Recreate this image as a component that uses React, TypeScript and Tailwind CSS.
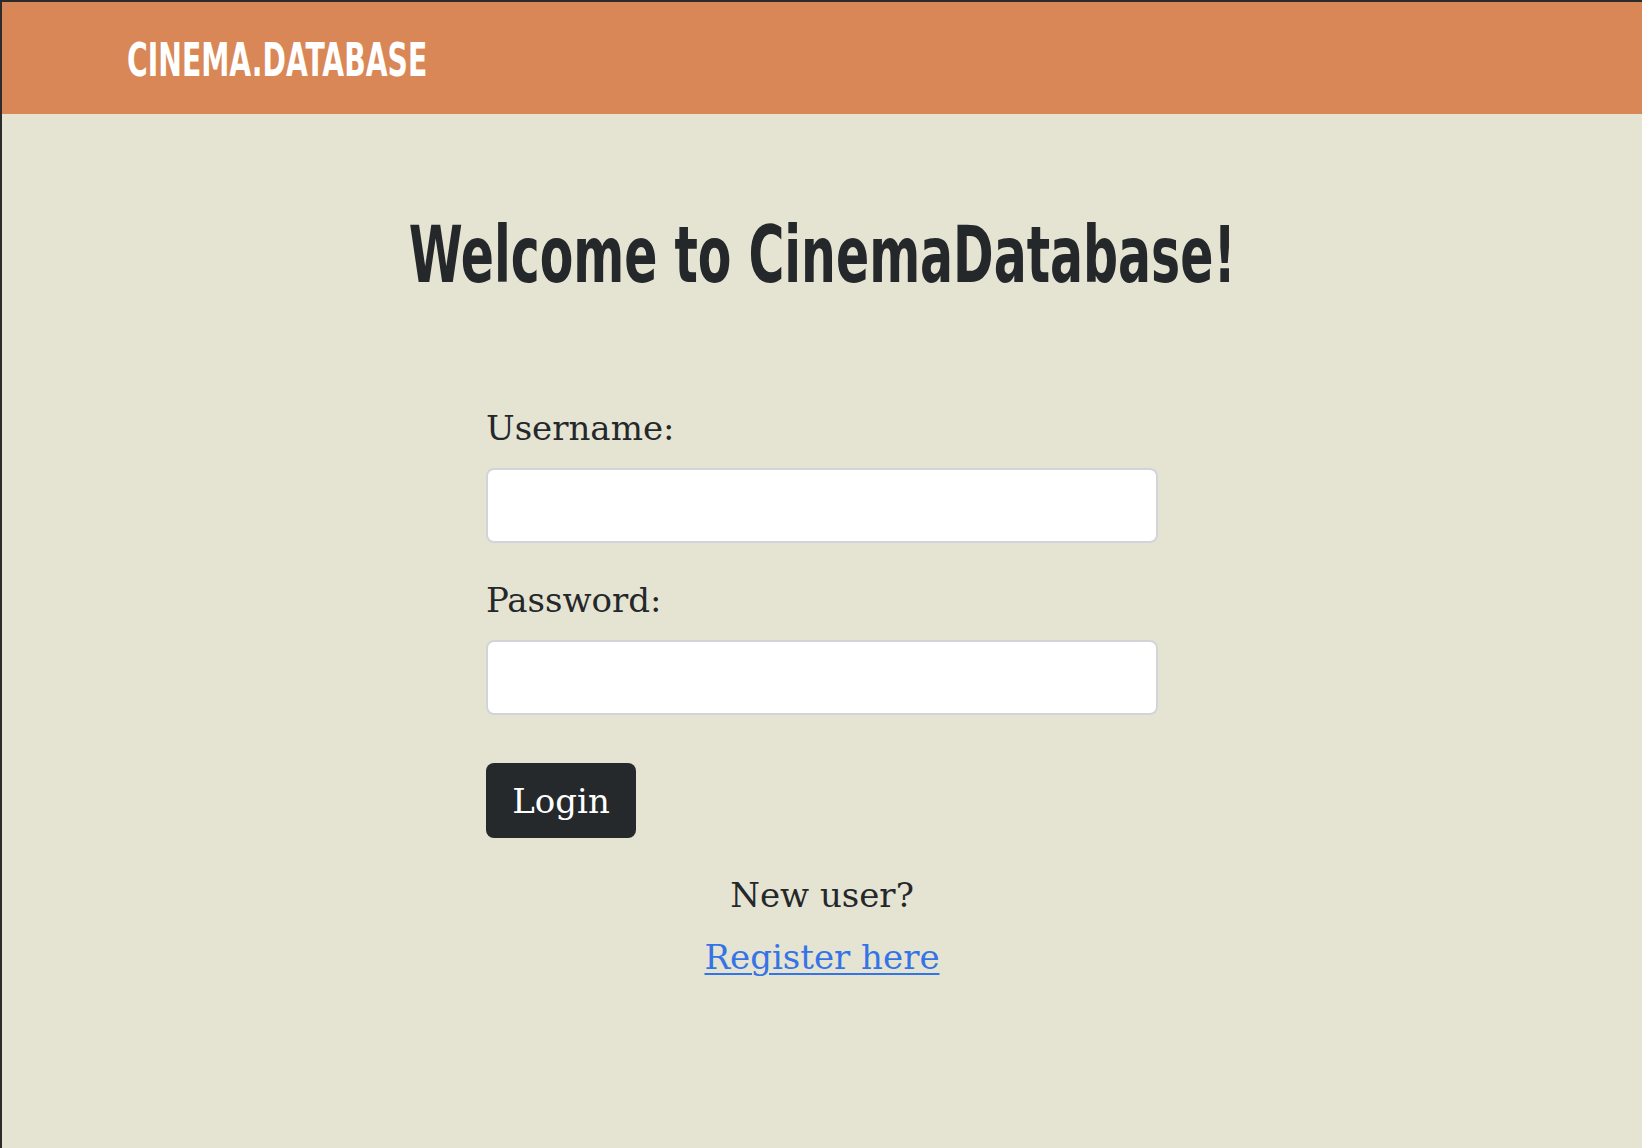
import { useState } from "react";

const condensed = "font-['DejaVu_Sans_Condensed','DejaVu_Sans',sans-serif]";
const slab = "font-['DejaVu_Serif','Liberation_Serif',serif]";

const Header = () => (
  <header className="flex h-[112px] items-center bg-[#d98756] pt-[3px] pl-[125px]">
    <span
      className={`${condensed} inline-block origin-left scale-x-[0.683] text-[46px] leading-none font-bold text-white`}
    >
      CINEMA.DATABASE
    </span>
  </header>
);

const Field = ({
  label,
  type,
  value,
  onChange,
  first,
}: {
  label: string;
  type: string;
  value: string;
  onChange: (v: string) => void;
  first?: boolean;
}) => (
  <div className={first ? "" : "mt-[40px]"}>
    <label className={`${slab} block text-[34px] leading-none text-[#25282b]`}>
      {label}
    </label>
    <input
      type={type}
      value={value}
      onChange={(e) => onChange(e.target.value)}
      className="mt-[23px] block h-[75px] w-full rounded-[8px] border-2 border-[#d1d5d9] bg-white px-4 text-[28px] outline-none"
    />
  </div>
);

export default function App() {
  const [username, setUsername] = useState("");
  const [password, setPassword] = useState("");

  return (
    <div className="min-h-screen border-t-2 border-l-2 border-[#2b2b2b] bg-[#e5e4d3]">
      <Header />
      <main className="flex flex-col items-center">
        <h1
          className={`${condensed} mt-[102px] inline-block scale-x-[0.697] text-[78px] leading-none font-bold text-[#25282b]`}
        >
          Welcome to CinemaDatabase!
        </h1>

        <form
          onSubmit={(e) => e.preventDefault()}
          className="mt-[117px] w-[672px]"
        >
          <Field
            first
            label="Username:"
            type="text"
            value={username}
            onChange={setUsername}
          />
          <Field
            label="Password:"
            type="password"
            value={password}
            onChange={setPassword}
          />
          <button
            type="submit"
            className={`${slab} mt-[48px] h-[75px] w-[150px] rounded-[8px] bg-[#26292c] text-[34px] leading-none text-white`}
          >
            Login
          </button>

          <div className={`${slab} mt-[40px] text-center text-[34px] leading-none text-[#25282b]`}>
            <p>New user?</p>
            <a
              href="#"
              className="mt-[28px] inline-block text-[#3574e6] underline decoration-2 underline-offset-4"
            >
              Register here
            </a>
          </div>
        </form>
      </main>
    </div>
  );
}
